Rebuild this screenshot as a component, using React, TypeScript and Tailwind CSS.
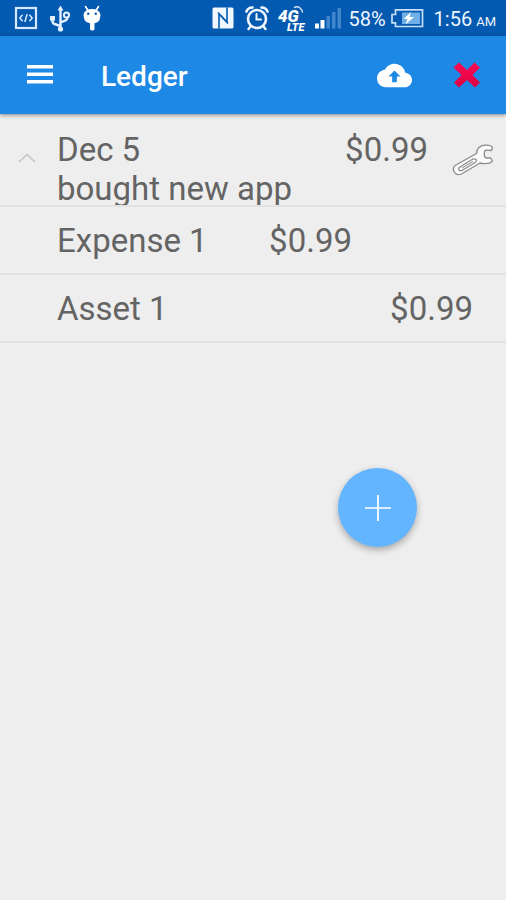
type Posting = {
  account: string;
  debit?: string;
  credit?: string;
};

const entry = { date: 'Dec 5', description: 'bought new app', amount: '$0.99' };

const postings: Posting[] = [
  { account: 'Expense 1', debit: '$0.99' },
  { account: 'Asset 1', credit: '$0.99' },
];

function LeftStatusIcons() {
  return (
    <div className="flex items-center">
      {/* developer mode */}
      <svg width="24" height="24" viewBox="0 0 24 24" fill="none" stroke="#d5e8ff">
        <rect x="2" y="2" width="20" height="20" strokeWidth="2.2" />
        <path d="M8.6 8.8 5.8 12l2.8 3.2M15.4 8.8l2.8 3.2-2.8 3.2M13.2 8l-2.4 8" strokeWidth="1.5" />
      </svg>
      {/* usb */}
      <svg className="ml-2.5" width="24" height="28" viewBox="0 0 24 28" fill="none" stroke="#e4f0ff" strokeWidth="2.4">
        <path d="M12.5 5v18M12.5 22 6.5 20q-2-.7-2-3v-1.5M12.5 18.5l4.5-1.8q2.8-1 2.2-4" />
        <circle cx="12.5" cy="25" r="2.6" fill="#e4f0ff" stroke="none" />
        <path d="M12.5 1.5 15.5 6.5h-6z" fill="#e4f0ff" stroke="none" />
        <rect x="2" y="12" width="5" height="4.6" fill="#e4f0ff" stroke="none" />
        <circle cx="18.5" cy="11" r="2.6" strokeWidth="2" />
      </svg>
      {/* android debug */}
      <svg className="ml-2" width="24" height="28" viewBox="0 0 24 28">
        <path d="M5.5 2.5 8 6.5M18.5 2.5 16 6.5" stroke="#fff" strokeWidth="1.6" strokeLinecap="round" />
        <path d="M3.5 10.5Q5 5 12 5t8.5 5.5L20 14q-.5 4.5-5.5 5.2V25q0 1.500-2.200 1.500T10 25v-5.800Q4.500 18.500 4 14z" fill="#fff" />
        <circle cx="8.2" cy="9.7" r="1.2" fill="#0459b0" />
        <circle cx="15.8" cy="9.7" r="1.2" fill="#0459b0" />
      </svg>
    </div>
  );
}

function RightStatusIcons() {
  return (
    <div className="flex items-center">
      {/* nfc */}
      <svg width="22" height="24" viewBox="0 0 22 24">
        <rect x="0.5" y="1.5" width="21" height="21" rx="1.5" fill="#f1f7ff" />
        <path d="M7 22.5V8l9 9.5M15 1.5V16L6 6.5" fill="none" stroke="#0459b0" strokeWidth="1.6" />
      </svg>
      {/* alarm */}
      <svg className="ml-2.5" width="26" height="26" viewBox="0 0 26 26" fill="none" stroke="#f1f7ff" strokeLinecap="round">
        <circle cx="13" cy="14" r="9" strokeWidth="2.6" />
        <path d="M12.5 9v5.5H17" strokeWidth="2" />
        <path d="M2.5 6.5Q4 2.5 8.5 2.5M23.5 6.5Q22 2.5 17.5 2.5" strokeWidth="2.6" />
        <path d="M6.5 21.5 4.5 24M19.5 21.5l2 2.5" strokeWidth="2.4" />
      </svg>
      {/* mobile network */}
      <svg className="ml-2" width="30" height="30" viewBox="0 0 30 30" fill="#fff" fontFamily="Roboto, sans-serif" fontWeight="900" fontStyle="italic">
        <text x="0" y="19" fontSize="17">4G</text>
        <text x="9" y="28" fontSize="11">LTE</text>
        <path d="M16 4.500q3.500-1.500 6 .5t2.500 4.500" fill="none" stroke="#cfe3fa" strokeWidth="1.5" />
      </svg>
      {/* signal */}
      <svg className="ml-1.5" width="28" height="24" viewBox="0 0 28 24">
        <rect x="1" y="17.5" width="4" height="5" fill="#fff" />
        <rect x="6.5" y="14" width="4" height="8.5" fill="#fff" />
        <rect x="12.5" y="10" width="3.5" height="12.5" fill="#3f86cb" />
        <rect x="18" y="6" width="3.5" height="16.5" fill="#3f86cb" />
        <rect x="23.5" y="2" width="3.5" height="20.5" fill="#3f86cb" />
      </svg>
      <span className="ml-1.5 pt-0.5 text-xl">58%</span>
      {/* battery, charging */}
      <svg className="ml-1" width="34" height="20" viewBox="0 0 34 20">
        <rect x="12" y="4.5" width="18" height="11.5" fill="#6faee6" />
        <path d="M5.5 1.8h27v16.7h-27v-3.7H2V6.500h3.500z" fill="none" stroke="#c6dff8" strokeWidth="1.7" />
        <path d="M21 4 13.5 11h4L15.5 16.5 24 9h-4.500z" fill="#fff" />
      </svg>
      <span className="ml-2.5 flex items-baseline gap-1 pt-0.5 text-xl">
        1:56 <span className="text-[13px]">AM</span>
      </span>
    </div>
  );
}

function WrenchIcon() {
  return (
    <svg width="42" height="32" viewBox="0 0 42 32" fill="#fbfbfb" stroke="#8c8c8c" strokeWidth="1.3" strokeLinejoin="round">
      <path d="M24.5 9.5C25 4 28 1.5 33 1.2 36 1 39.5 1.5 40.5 3.5L39.5 6.5 34 6.2Q32.3 6.5 32.3 9.2V11q.2 2.800 2.200 3l4-.2 2 3.200-3 2.200q-5.500.8-9.500-.2L9.500 30Q4.500 32 2.300 28-.2 23.500 3.500 21.200z" />
      <path d="M7.2 23.5 20.5 15.2q3-1 4 .8 0 1.800-1.800 2.800L10 26.500q-2.300.8-3.300-.8-.3-1.400.5-2.200z" />
      <path d="M10 24 21 17.4" strokeWidth="1" />
    </svg>
  );
}

export default function App() {
  return (
    <div className="min-h-screen bg-[#eeeeee] font-[Roboto,sans-serif]">
      <div className="flex h-9 items-center justify-between bg-[#0459b0] pr-2.5 pl-3.5 text-[#eef6ff]">
        <LeftStatusIcons />
        <RightStatusIcons />
      </div>

      <header className="flex h-[78px] items-center bg-[#1e88e5] pr-6 pl-[27px] text-white shadow-[0_1px_4px_rgba(0,0,0,0.45)]">
        <button type="button" aria-label="Open menu">
          <svg width="26" height="20" viewBox="0 0 26 20" fill="currentColor">
            <path d="M0 0h26v3.500H0zM0 7.500h26V11H0zM0 15h26v3.500H0z" />
          </svg>
        </button>
        <h1 className="ml-12 flex-1 pt-1 text-[28px] font-medium">Ledger</h1>
        <button type="button" aria-label="Upload">
          <svg width="35" height="35" viewBox="0 0 24 24" fill="currentColor" fillRule="evenodd">
            <path d="M19.35 10.04C18.67 6.59 15.64 4 12 4 9.11 4 6.6 5.64 5.35 8.04 2.34 8.36 0 10.91 0 14c0 3.31 2.69 6 6 6h13c2.76 0 5-2.24 5-5 0-2.64-2.05-4.78-4.65-4.96zM12 8.6 7.9 12.7h2.5v3.9h3.2v-3.9h2.5z" />
          </svg>
        </button>
        <button type="button" aria-label="Delete" className="ml-10">
          <svg width="30" height="28" viewBox="0 0 30 28">
            <defs>
              <linearGradient id="cross" x1="0" y1="0" x2="0" y2="1">
                <stop offset="0" stopColor="#ff0a50" />
                <stop offset="1" stopColor="#dc0044" />
              </linearGradient>
            </defs>
            <path d="M7 1.5 15 9l7.5-7.5L28 6.5 20.5 14l7.5 7.5-5 5L15 19l-8 7.500L2 21.500 9.500 14 1.500 6.500z" fill="url(#cross)" />
          </svg>
        </button>
      </header>

      <main className="text-[33px]/[39px] text-[#646464]">
        <table className="w-full table-fixed border-collapse whitespace-nowrap">
          <colgroup>
            <col className="w-[57px]" />
            <col />
            <col className="w-24" />
            <col className="w-[76px]" />
            <col className="w-[45px]" />
            <col className="w-[33px]" />
          </colgroup>
          <tbody>
            <tr className="border-b-2 border-[#e2e2e2]">
              <td className="pr-1 pb-1 align-middle">
                <button type="button" aria-label="Collapse" className="block w-full">
                  <svg className="mx-auto" width="18" height="10" viewBox="0 0 18 10" fill="none" stroke="#c6c6c6" strokeWidth="1.6">
                    <path d="M1 9 9 1.5 17 9" />
                  </svg>
                </button>
              </td>
              <td colSpan={3} className="p-0 align-top">
                <div className="h-[91px] overflow-hidden pt-4">
                  <div className="flex justify-between">
                    <span>{entry.date}</span>
                    <span>{entry.amount}</span>
                  </div>
                  <p>{entry.description}</p>
                </div>
              </td>
              <td colSpan={2} className="align-middle">
                <button type="button" aria-label="Edit entry" className="ml-6 block">
                  <WrenchIcon />
                </button>
              </td>
            </tr>
            {postings.map((posting) => (
              <tr key={posting.account} className="h-[68px] border-b-2 border-[#e2e2e2]">
                <td />
                <td className="p-0">{posting.account}</td>
                <td className="p-0 text-right">{posting.debit}</td>
                <td colSpan={2} className="p-0 text-right">{posting.credit}</td>
                <td />
              </tr>
            ))}
          </tbody>
        </table>

        <div className="mt-[125px] flex justify-end pr-[89px]">
          <button
            type="button"
            aria-label="Add entry"
            className="flex size-[79px] items-center justify-center rounded-full bg-[#64b5ff] shadow-[0_3px_7px_rgba(0,0,0,0.3)]"
          >
            <svg width="26" height="26" viewBox="0 0 26 26" stroke="#fff" strokeWidth="1.7">
              <path d="M13 0v26M0 13h26" />
            </svg>
          </button>
        </div>
      </main>
    </div>
  );
}
